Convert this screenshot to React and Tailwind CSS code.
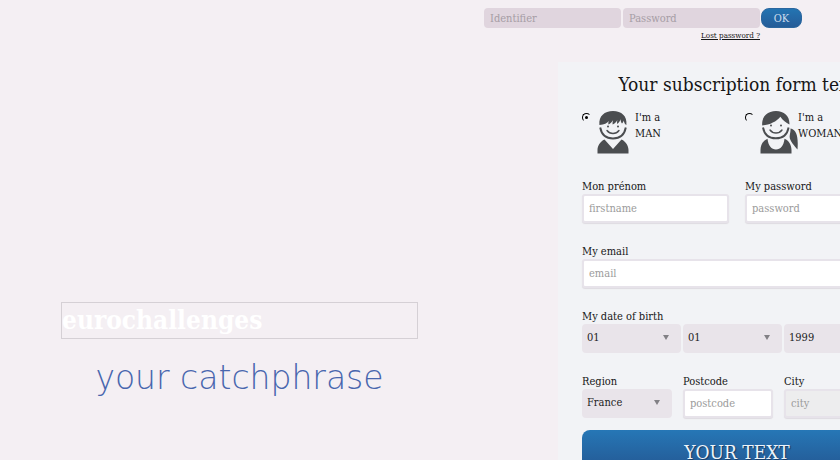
import React, { useState } from 'react';

const LABEL = 'block text-[11px] leading-[15px]';
const FIELD = 'block w-full h-[29px] rounded-[3px] border-2 border-[#e7e3ea] bg-white px-[5px] text-[11px] text-[#333333] placeholder:text-[#9b9b9b] shadow-[0_1px_1px_#dedbe1] outline-none disabled:bg-[#ededee]';
const LOGIN_FIELD = 'h-5 w-[137px] rounded-[4px] bg-[#e0d5de] px-[6px] text-[11px] text-[#444444] placeholder:text-[#a69da5] outline-none';

function ManIcon() {
  return (
    <svg className="h-11 w-[38px] shrink-0" viewBox="0 0 38 44" fill="#4b4d50" aria-hidden="true">
      <path d="M2.4 15C1.6 6 7.500 1 16 1s14.400 5 13.400 14c-1-.2-2.200-1.800-2.700-4.500-.3 1.400-1 2.500-1.700 3-.8-.8-1.300-2.200-1.500-4.200-.7 2.200-1.700 3.700-3.200 4.700-.4-1.200-.3-2.500.1-4-1.200 2-2.700 3.500-4.700 4.500-.3-1.200-.1-2.600.4-4.200-1.300 1.900-2.700 3.300-4.700 4.200-.2-1.200-.1-2.300.3-3.500-1.500 2.200-4.300 3.800-9.300 4z" />
      <path d="M3.200 17.500c1.300 7 6 11 12.800 11s11.500-4 12.800-11" fill="none" stroke="#4b4d50" strokeWidth="1.900" />
      <circle cx="11" cy="16.500" r="1" />
      <circle cx="21" cy="16.500" r="1" />
      <path d="M10 20.500c3 4 9 4 12 0" fill="none" stroke="#4b4d50" strokeWidth="1.400" strokeLinecap="round" />
      <path d="M.5 43.500V40c0-4 2.500-8.500 7-10.500L16 39l8.500-9.500c4.500 2 7 6.500 7 10.500v3.500z" />
    </svg>
  );
}

function WomanIcon() {
  return (
    <svg className="h-11 w-[38px] shrink-0" viewBox="0 0 38 44" fill="#4b4d50" aria-hidden="true">
      <path d="M2.200 15.500C1.500 6.500 7.500 1 16 1s14 5.500 13.400 13.500c-3.400-1.500-6.700-4.200-9-7.700-4 4.700-10 8-18.200 8.700z" />
      <path d="M3 17.500c1.300 7 6 10.800 12.800 10.800s11.500-3.800 12.800-10.800" fill="none" stroke="#4b4d50" strokeWidth="1.900" />
      <circle cx="11" cy="15.500" r="1" />
      <circle cx="21" cy="15.500" r="1" />
      <path d="M10 20c3 4 9 4 12 0" fill="none" stroke="#4b4d50" strokeWidth="1.400" strokeLinecap="round" />
      <path d="M30.500 18.500c6 1.500 8 7.500 7 21-3-3.500-8.500-9-7.800-13.500.3-2.500 1-4.500.8-7.500z" />
      <path d="M.5 43.500V40c0-5 2.500-9.500 7-11.300.8 7 4 10.800 8.500 10.800s7.700-3.800 8.500-10.800c4.500 1.800 7 6.300 7 11.300v3.500z" />
    </svg>
  );
}

function LoginBar() {
  return (
    <header className="h-[62px] pt-2 pr-[38px]">
      <form className="flex items-start justify-end" onSubmit={(e) => e.preventDefault()}>
        <div>
          <div className="flex gap-[2px]">
            <input type="text" aria-label="Identifier" placeholder="Identifier" className={LOGIN_FIELD} />
            <input type="password" aria-label="Password" placeholder="Password" className={LOGIN_FIELD} />
          </div>
          <a href="#lost" className="block pt-[2px] text-right text-[8px] leading-3 underline">Lost password ?</a>
        </div>
        <button type="submit" className="ml-px h-5 w-[41px] rounded-[8px] border border-[#2b679f] bg-linear-to-b from-[#2374b2] to-[#255c98] text-[11px] leading-none text-[#c9dced]">OK</button>
      </form>
    </header>
  );
}

function GenderOption({ value, label, icon, checked, onChange }) {
  return (
    <label className="flex items-start">
      <input
        type="radio"
        name="gender"
        value={value}
        checked={checked}
        onChange={() => onChange(value)}
        className="mt-[3px] mr-[6px] grid size-[9px] shrink-0 appearance-none place-items-center rounded-full border border-transparent border-t-black border-l-black checked:before:size-[3px] checked:before:rounded-full checked:before:bg-black"
      />
      {icon}
      <span className="text-[11px] leading-4">I'm a<br />{label}</span>
    </label>
  );
}

function Field({ id, label, className, ...props }) {
  return (
    <div className={className}>
      <label htmlFor={id} className={LABEL}>{label}</label>
      <input id={id} className={FIELD} {...props} />
    </div>
  );
}

function Select({ options, ...props }) {
  return (
    <div className="relative">
      <select className="block h-[29px] w-full appearance-none rounded-[4px] bg-[#e9e4ea] px-[5px] text-[11px] text-[#222222] outline-none" {...props}>
        {options.map((o) => <option key={o}>{o}</option>)}
      </select>
      <svg className="pointer-events-none absolute top-[11px] right-3 h-[5px] w-[6px]" viewBox="0 0 6 5" fill="#828085" aria-hidden="true">
        <path d="M0 0h6L3 5z" />
      </svg>
    </div>
  );
}

function SubscriptionForm() {
  const [gender, setGender] = useState('man');
  return (
    <form className="-mr-[76px] w-[358px] shrink-0 bg-[#f2f3f6] px-6 pt-2 pb-6" onSubmit={(e) => e.preventDefault()}>
      <h2 className="text-center text-[19px] leading-[28px] whitespace-nowrap">Your subscription form text</h2>
      <div className="mt-3 grid grid-cols-2 gap-x-4">
        <GenderOption value="man" label="MAN" icon={<ManIcon />} checked={gender === 'man'} onChange={setGender} />
        <GenderOption value="woman" label="WOMAN" icon={<WomanIcon />} checked={gender === 'woman'} onChange={setGender} />
      </div>
      <div className="mt-[25px] grid grid-cols-2 gap-x-4 gap-y-[21px]">
        <Field id="firstname" label="Mon prénom" type="text" placeholder="firstname" />
        <Field id="password" label="My password" type="password" placeholder="password" />
        <Field id="email" label="My email" type="email" placeholder="email" className="col-span-2" />
      </div>
      <fieldset className="mt-[21px]">
        <legend className={LABEL}>My date of birth</legend>
        <div className="grid grid-cols-[99px_99px_1fr] gap-[2px]">
          <Select aria-label="Day" options={['01', '02', '03']} />
          <Select aria-label="Month" options={['01', '02', '03']} />
          <Select aria-label="Year" options={['1999', '1998', '1997']} />
        </div>
      </fieldset>
      <div className="mt-[21px] grid grid-cols-[90px_90px_1fr] gap-[11px]">
        <div>
          <label htmlFor="region" className={LABEL}>Region</label>
          <Select id="region" options={['France', 'Belgique', 'Suisse']} />
        </div>
        <Field id="postcode" label="Postcode" type="text" placeholder="postcode" />
        <Field id="city" label="City" type="text" placeholder="city" disabled />
      </div>
      <button type="submit" className="mt-3 h-[44px] w-full rounded-[8px] bg-linear-to-b from-[#2677b6] to-[#235590] text-[19px] text-[#edf4fb] [text-shadow:1px_1px_1px_#17395f]">YOUR TEXT</button>
    </form>
  );
}

export default function App() {
  return (
    <div className="h-screen overflow-hidden bg-[#f4eff3] font-['DejaVu_Serif_Condensed','DejaVu_Serif',serif] text-[#161616]">
      <LoginBar />
      <main className="flex items-start">
        <section className="min-w-0 flex-1 pt-[240px] pr-[140px] pl-[61px]">
          <h1 className="border border-[#d5d0d5] text-[26px] leading-[35px] font-bold text-white">eurochallenges</h1>
          <p className="mt-[14px] text-center font-['DejaVu_Sans_Light','DejaVu_Sans',sans-serif] text-[33px] leading-[50px] font-extralight whitespace-nowrap text-[#4866ae]">your catchphrase</p>
        </section>
        <SubscriptionForm />
      </main>
    </div>
  );
}
